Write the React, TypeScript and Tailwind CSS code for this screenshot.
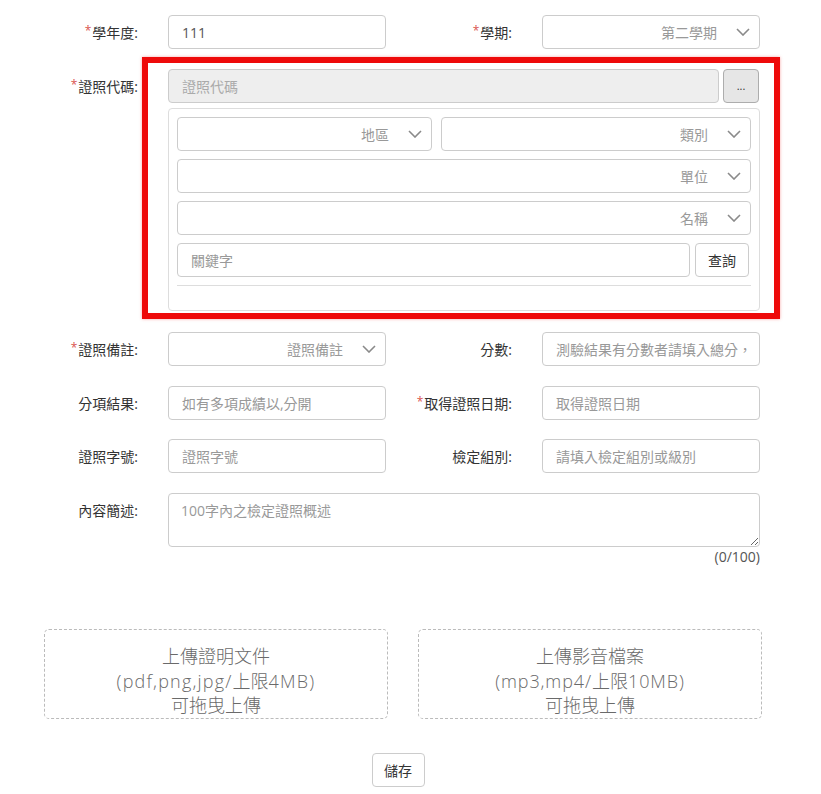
import React from 'react';

const Chevron = () => (
  <svg width="14" height="8" viewBox="0 0 14 8" className="shrink-0">
    <polyline points="1,1 7,7 13,1" fill="none" stroke="#8a8a8a" strokeWidth="1.6" />
  </svg>
);

function Label({ text, required, width = 'w-[126px]' }: { text: string; required?: boolean; width?: string }) {
  return (
    <div className={`${width} shrink-0 h-[34px] flex items-center justify-end text-[14px] text-[#333]`}>
      {required && <span className="text-[#d9534f] text-[12px] mr-[1px] -mt-[3px]">*</span>}
      {text}
    </div>
  );
}

function Select({ text, className = '' }: { text: string; className?: string }) {
  return (
    <div className={`h-[34px] border border-[#ccc] rounded-[4px] bg-white flex items-center justify-end pr-[9px] text-[14px] text-[#999] ${className}`}>
      <span className="mr-[19px]">{text}</span>
      <Chevron />
    </div>
  );
}

function Input({ value, placeholder, className = '' }: { value?: string; placeholder?: string; className?: string }) {
  return (
    <div className={`h-[34px] border border-[#ccc] rounded-[4px] bg-white flex items-center px-[13px] text-[14px] whitespace-nowrap overflow-hidden ${className}`}>
      {value ? <span className="text-[#555]">{value}</span> : <span className="text-[#999]">{placeholder}</span>}
    </div>
  );
}

function UploadBox({ title, types }: { title: string; types: React.ReactNode }) {
  return (
    <div className="w-[344px] h-[90px] border border-dashed border-[#bbb] rounded-[5px] pt-[14px] text-center text-[18px] leading-[24.5px] text-[#6a6a6a] font-light">
      <div>{title}</div>
      <div>{types}</div>
      <div>可拖曳上傳</div>
    </div>
  );
}

export default function App() {
  return (
    <div className="w-[821px] h-[794px] bg-white font-['Open_Sans','Noto_Sans_CJK_TC',sans-serif] overflow-hidden">
      <div className="pl-[12px] pt-[15px] w-[760px]">
        {/* 學年度 / 學期 */}
        <div className="flex mb-[20px]">
          <Label text="學年度:" required />
          <Input value="111" className="w-[218px] ml-[30px]" />
          <Label text="學期:" required />
          <Select text="第二學期" className="w-[218px] ml-[30px]" />
        </div>

        {/* 證照代碼 */}
        <div className="flex relative">
          <Label text="證照代碼:" required />
          <div className="ml-[30px] w-[593px]">
            <div className="flex gap-[4px]">
              <div className="h-[34px] w-[551px] border border-[#ccc] rounded-[4px] bg-[#eee] flex items-center px-[13px] text-[14px] text-[#aaa]">
                證照代碼
              </div>
              <button className="h-[34px] w-[36px] border border-[#adadad] rounded-[4px] bg-[#e6e6e6] text-[11px] text-[#333] leading-none pb-[2px]">
                ...
              </button>
            </div>
            <div className="mt-[5px] border border-[#ddd] rounded-[4px] px-[8px] pt-[8px] pb-[24px] flex flex-col">
              <div className="flex gap-[9px]">
                <Select text="地區" className="w-[255px]" />
                <Select text="類別" className="flex-1" />
              </div>
              <Select text="單位" className="mt-[8px]" />
              <Select text="名稱" className="mt-[8px]" />
              <div className="flex gap-[5px] mt-[8px]">
                <Input placeholder="關鍵字" className="flex-1" />
                <button className="h-[34px] w-[54px] border border-[#ccc] rounded-[4px] bg-white text-[14px] text-[#333] mr-[2px]">
                  查詢
                </button>
              </div>
              <div className="mt-[8px] h-px bg-[#ddd]" />
            </div>
          </div>
          <div className="absolute left-[130px] top-[-12px] w-[638px] h-[262px] border-[6px] border-[#ee0a0a] shadow-[0_0_3px_rgba(238,10,10,0.35)] pointer-events-none" />
        </div>

        {/* 證照備註 / 分數 */}
        <div className="flex mt-[21px] mb-[20px]">
          <Label text="證照備註:" required />
          <Select text="證照備註" className="w-[218px] ml-[30px]" />
          <Label text="分數:" />
          <Input placeholder="測驗結果有分數者請填入總分，" className="w-[218px] ml-[30px]" />
        </div>

        {/* 分項結果 / 取得證照日期 */}
        <div className="flex mb-[19px]">
          <Label text="分項結果:" />
          <Input placeholder="如有多項成績以,分開" className="w-[218px] ml-[30px]" />
          <Label text="取得證照日期:" required />
          <Input placeholder="取得證照日期" className="w-[218px] ml-[30px]" />
        </div>

        {/* 證照字號 / 檢定組別 */}
        <div className="flex mb-[20px]">
          <Label text="證照字號:" />
          <Input placeholder="證照字號" className="w-[218px] ml-[30px]" />
          <Label text="檢定組別:" />
          <Input placeholder="請填入檢定組別或級別" className="w-[218px] ml-[30px]" />
        </div>

        {/* 內容簡述 */}
        <div className="flex">
          <Label text="內容簡述:" />
          <div className="ml-[30px] w-[593px]">
            <textarea
              placeholder="100字內之檢定證照概述"
              className="block w-full h-[54px] border border-[#ccc] rounded-[4px] px-[12px] pt-[6px] text-[14px] text-[#555] placeholder:text-[#999] outline-none"
            />
            <div className="text-right text-[14px] text-[#555] leading-[20px]">(0/100)</div>
          </div>
        </div>
      </div>

      {/* uploads */}
      <div className="flex gap-[30px] ml-[44px] mt-[62px]">
        <UploadBox
          title="上傳證明文件"
          types={
            <>
              <span className="tracking-[1.2px]">(pdf,png,jpg/</span>上限<span className="tracking-[1.2px]">4MB)</span>
            </>
          }
        />
        <UploadBox
          title="上傳影音檔案"
          types={
            <>
              <span className="tracking-[0.9px]">(mp3,mp4/</span>上限<span className="tracking-[0.9px]">10MB)</span>
            </>
          }
        />
      </div>

      <div className="flex justify-center mt-[34px] pr-[25px]">
        <button className="w-[53px] h-[34px] border border-[#ccc] rounded-[4px] bg-white text-[14px] text-[#333]">
          儲存
        </button>
      </div>
    </div>
  );
}
